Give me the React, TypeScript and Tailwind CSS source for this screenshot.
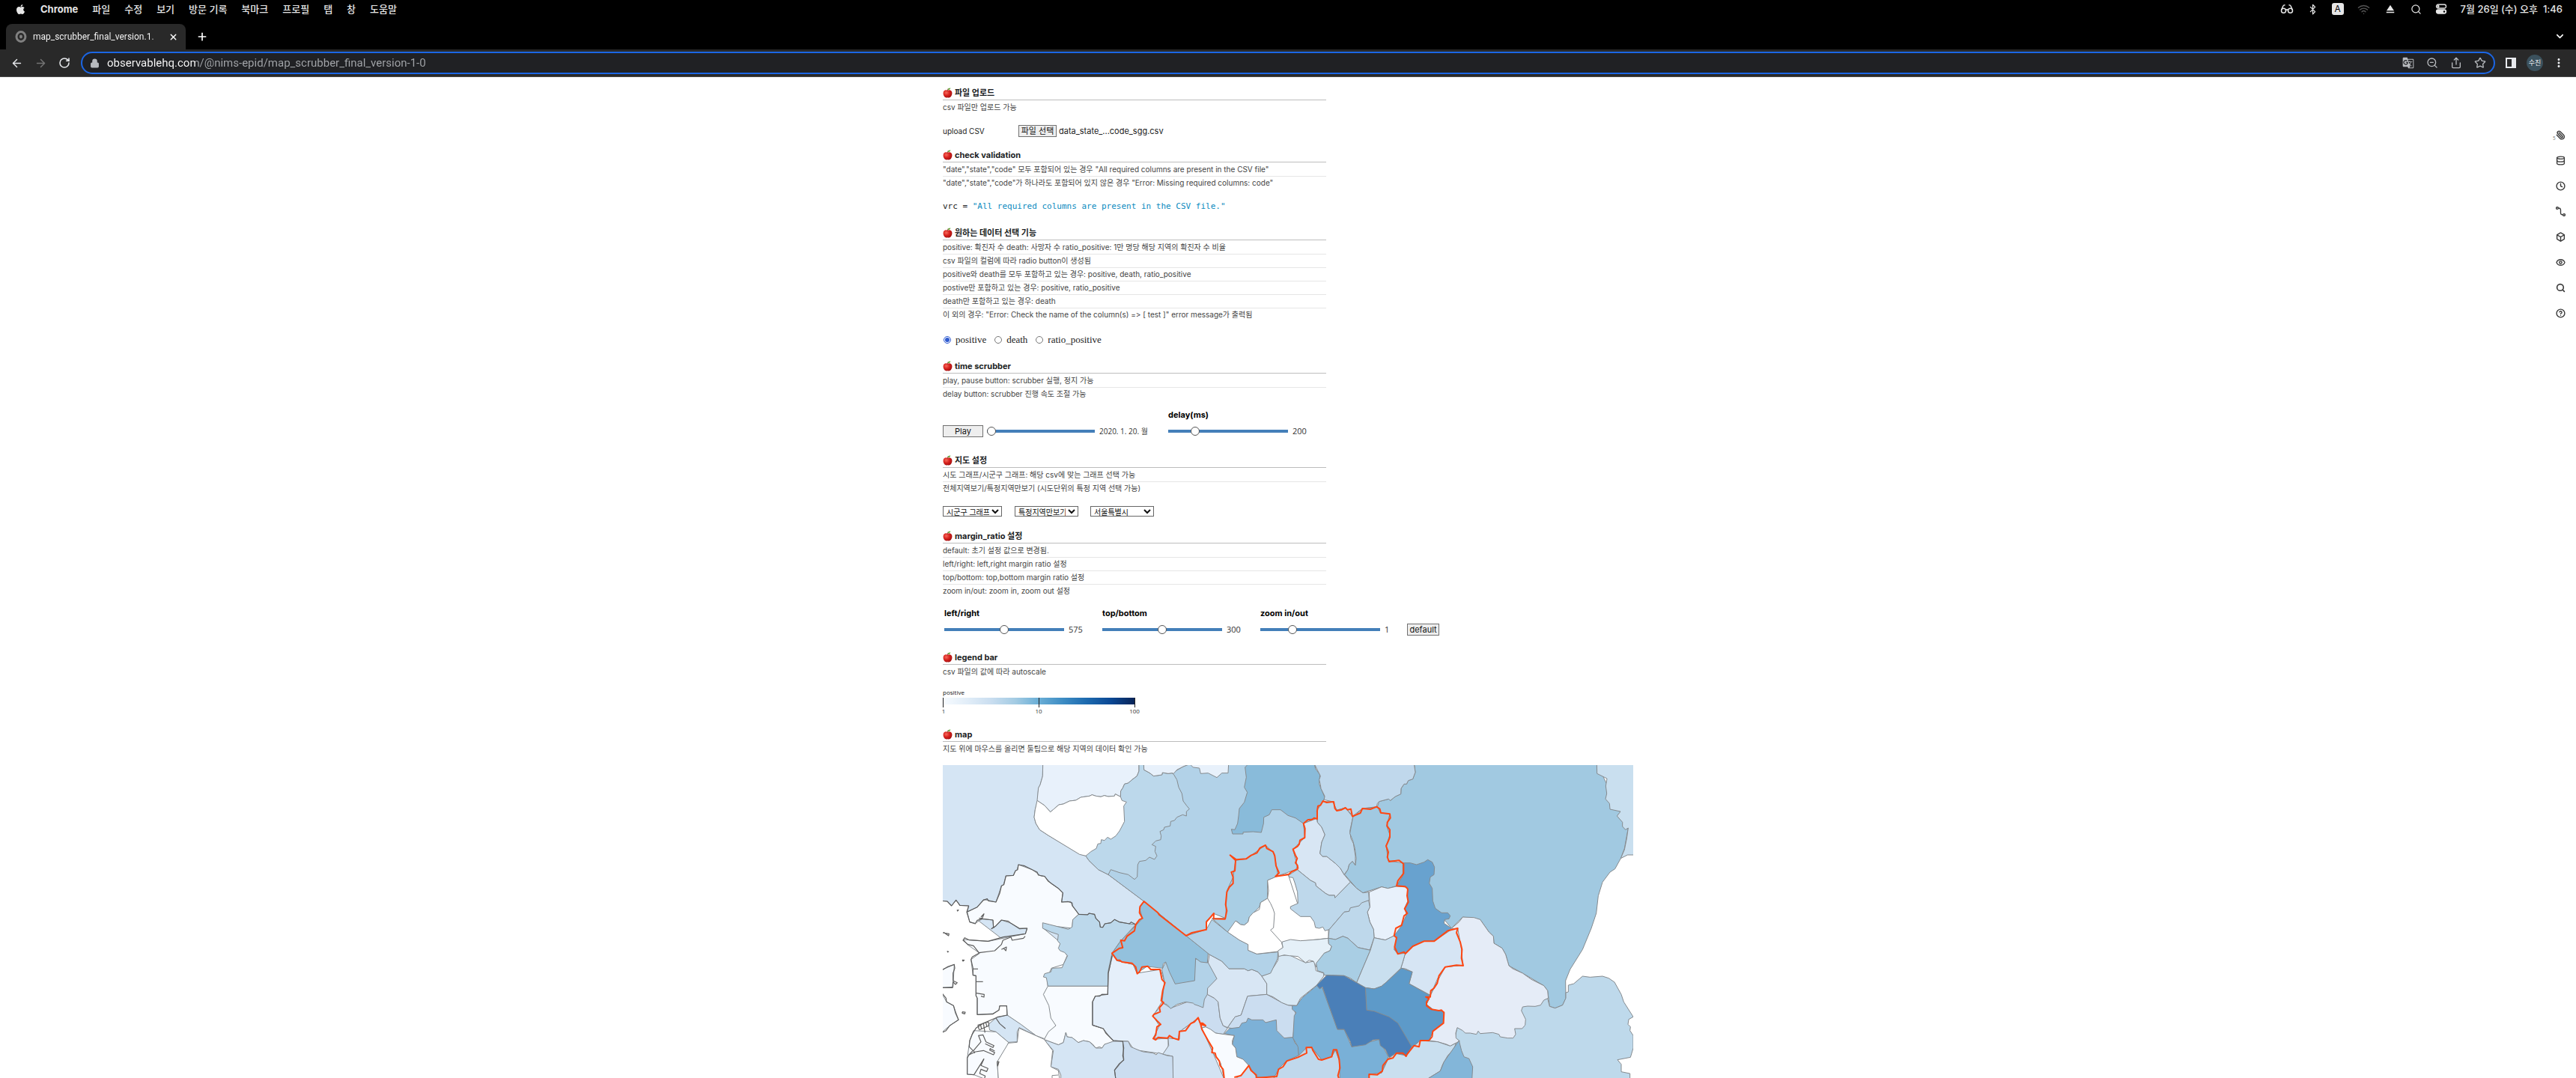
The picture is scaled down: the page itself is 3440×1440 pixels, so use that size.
import React from "react";
import {
  ArrowLeft,
  ArrowRight,
  Bluetooth,
  Box,
  ChevronDown,
  CircleHelp,
  Clock,
  Database,
  Eye,
  Glasses,
  Lock,
  Paperclip,
  Plus,
  RotateCw,
  Search,
  Share,
  Star,
  Wifi,
  X,
  ZoomOut,
} from "lucide-react";
import { FaApple } from "react-icons/fa";
import { MdEject, MdGTranslate, MdMoreVert } from "react-icons/md";

/* ---------- browser chrome ---------- */

const menus = ["파일", "수정", "보기", "방문 기록", "북마크", "프로필", "탭", "창", "도움말"];

function MenuBar() {
  return (
    <div className="flex h-6 items-center justify-between bg-black pl-5 pr-[18px] text-[13px] leading-none text-[#e6e6e6]">
      <nav className="flex items-center gap-[19px]">
        <button aria-label="Apple">
          <FaApple size={15} />
        </button>
        <button className="font-bold">Chrome</button>
        {menus.map((m) => (
          <button key={m} className="font-medium">
            {m}
          </button>
        ))}
      </nav>
      <div className="flex items-center gap-[18px]">
        <Glasses size={18} />
        <Bluetooth size={15} />
        <span className="flex h-4 w-4 items-center justify-center rounded-[3px] bg-[#e6e6e6] text-xs text-black">A</span>
        <Wifi size={17} className="text-[#555]" />
        <MdEject size={18} />
        <Search size={15} />
        <svg width="16" height="14" viewBox="0 0 16 14" fill="none" stroke="#e6e6e6" strokeWidth="1.3">
          <rect x="1.5" y="1" width="13" height="5" rx="2.5" />
          <circle cx="4" cy="3.5" r="1" />
          <rect x="1.5" y="8" width="13" height="5" rx="2.5" fill="#e6e6e6" />
          <circle cx="12" cy="10.5" r="1.2" fill="#000" stroke="none" />
        </svg>
        <span className="font-medium">7월 26일 (수) 오후&nbsp; 1:46</span>
      </div>
    </div>
  );
}

function TabStrip() {
  return (
    <div className="flex h-[42px] items-end justify-between bg-black pl-2 pr-3.5 text-white">
      <div className="flex h-[34px] items-center">
        <div className="flex h-full w-[240px] items-center rounded-t-lg bg-[#292929] pl-3 pr-2.5">
          <svg width="16" height="16" viewBox="0 0 16 16" fill="none" stroke="#808080" strokeWidth="3">
            <ellipse cx="8" cy="8" rx="6" ry="6.5" />
            <ellipse cx="8" cy="8" rx="2" ry="2.4" fill="#808080" stroke="none" />
          </svg>
          <span className="ml-2 w-[174px] whitespace-nowrap bg-[linear-gradient(to_right,#fff_155px,#444_174px)] bg-clip-text font-['Roboto',sans-serif] text-xs text-transparent">
            map_scrubber_final_version.1.
          </span>
          <button aria-label="Close tab" className="ml-2">
            <X size={13} strokeWidth={2.5} />
          </button>
        </div>
        <button aria-label="New tab" className="ml-3.5">
          <Plus size={16} strokeWidth={2.5} />
        </button>
      </div>
      <button aria-label="Search tabs" className="mb-2.5">
        <ChevronDown size={15} strokeWidth={2.5} />
      </button>
    </div>
  );
}

function AddressBar() {
  return (
    <div className="flex h-[37px] items-center border-b border-[#4a4a4a] bg-[#292929] pl-3.5 pr-3.5 text-[#e8eaed]">
      <button aria-label="Back" className="mr-[15px]">
        <ArrowLeft size={17} />
      </button>
      <button aria-label="Forward" className="mr-[15px] text-[#757575]">
        <ArrowRight size={17} />
      </button>
      <button aria-label="Reload" className="mr-3.5">
        <RotateCw size={16} strokeWidth={2.3} />
      </button>
      <div className="flex h-[30px] flex-1 items-center rounded-full border-2 border-[#1b66e5] bg-[#202124] pl-2.5 pr-2.5 text-[#b8bbbf]">
        <Lock size={13} fill="currentColor" />
        <input
          aria-label="Address"
          defaultValue="observablehq.com/@nims-epid/map_scrubber_final_version-1-0"
          className="ml-2.5 flex-1 bg-[linear-gradient(to_right,#fff_118px,#a3a6aa_118px)] bg-clip-text font-['Roboto','Inter',sans-serif] text-[15px] text-transparent outline-none"
        />
        <div className="flex items-center gap-4">
          <button aria-label="Translate">
            <MdGTranslate size={16} />
          </button>
          <button aria-label="Zoom">
            <ZoomOut size={16} />
          </button>
          <button aria-label="Share">
            <Share size={16} />
          </button>
          <button aria-label="Bookmark">
            <Star size={16} />
          </button>
        </div>
      </div>
      <button aria-label="Side panel" className="ml-3.5 flex h-3.5 w-3.5 justify-end border-2 border-[#e8eaed]">
        <span className="h-full w-1 bg-[#e8eaed]" />
      </button>
      <button className="ml-3.5 flex h-[22px] w-[22px] items-center justify-center rounded-full bg-[#3b515d] text-[9px]">수진</button>
      <button aria-label="More" className="ml-3">
        <MdMoreVert size={18} />
      </button>
    </div>
  );
}

/* ---------- notebook ---------- */

function AppleMark() {
  return (
    <svg width="13" height="14" viewBox="0 0 24 26" className="shrink-0">
      <defs>
        <radialGradient id="apple-skin" cx="0.35" cy="0.35" r="0.7">
          <stop offset="0" stopColor="#f56a5c" />
          <stop offset="0.5" stopColor="#d9241f" />
          <stop offset="1" stopColor="#a30f10" />
        </radialGradient>
      </defs>
      <path d="M12 7c-4-2-11-1-11 7 0 6 4 11 8 11 1.500 0 2-.5 3-.5s1.500.5 3 .5c4 0 8-5 8-11 0-8-7-9-11-7z" fill="url(#apple-skin)" />
      <path d="M12 8c0-3 .5-4 2-6" stroke="#6b3e1c" strokeWidth="1.800" fill="none" />
      <path d="M13 5.500c0-3 3-5 6-4.500 0 3-3 5-6 4.500z" fill="#58a92f" />
    </svg>
  );
}

function Notes({ title, rows, children, className }: { title: string; rows: string[]; children?: React.ReactNode; className: string }) {
  return (
    <section className={className}>
      <div className="max-w-[512px]">
        <h3 className="flex h-[19px] items-center gap-[3px] border-b border-[#bdbdbd] text-[11px] font-bold text-[#1b1e23]">
          <AppleMark />
          {title}
        </h3>
        <ul className="text-[10px] leading-[17px] text-[#444]">
          {rows.map((r) => (
            <li key={r} className="border-b border-[#e6e6e6] pt-px last:border-transparent [&+li]:pt-0">
              {r}
            </li>
          ))}
        </ul>
      </div>
      {children}
    </section>
  );
}

function Slider({ id, value, max, className }: { id: string; value: number; max: number; className: string }) {
  return (
    <input
      id={id}
      type="range"
      aria-label={id}
      min={0}
      max={max}
      step="any"
      defaultValue={value}
      className={
        "h-3 appearance-none bg-[linear-gradient(#447fb9,#447fb9)] bg-[length:100%_4px] bg-center bg-no-repeat [&::-webkit-slider-thumb]:h-3 [&::-webkit-slider-thumb]:w-3 [&::-webkit-slider-thumb]:appearance-none [&::-webkit-slider-thumb]:rounded-full [&::-webkit-slider-thumb]:border [&::-webkit-slider-thumb]:border-[#555] [&::-webkit-slider-thumb]:bg-white " +
        className
      }
    />
  );
}

function LabelledSlider({ id, label, value, max, shown }: { id: string; label: string; value: number; max: number; shown: string }) {
  return (
    <div className="w-[211px]">
      <label htmlFor={id} className="block text-[11px] font-bold leading-4 text-black">
        {label}
      </label>
      <div className="mt-2 flex h-3 items-center gap-1.5">
        <Slider id={id} value={value} max={max} className="w-40" />
        <output htmlFor={id} className="font-['Open_Sans',sans-serif] text-[11px] leading-3 text-[#333]">
          {shown}
        </output>
      </div>
    </div>
  );
}

function Radios() {
  return (
    <div className="mt-3.5 flex h-5 items-center font-['Liberation_Serif',serif] text-[13px] text-[#222]">
      {[
        ["positive", "mr-2.5"],
        ["death", "mr-2.5"],
        ["ratio_positive", ""],
      ].map(([name, gap], i) => (
        <label key={name} className={"flex items-center gap-1.5 " + gap}>
          <input type="radio" name="measure" defaultChecked={i === 0} className="ml-px h-2.5 w-2.5 accent-[#2f5bd0]" />
          {name}
        </label>
      ))}
    </div>
  );
}

function Legend() {
  return (
    <svg width="264" height="38" viewBox="0 0 264 38" className="mt-3 overflow-visible font-['Open_Sans',sans-serif]" fontSize="8">
      <defs>
        <linearGradient id="blues">
          <stop offset="0" stopColor="#f7fbff" />
          <stop offset="0.13" stopColor="#e1edf8" />
          <stop offset="0.25" stopColor="#cadef0" />
          <stop offset="0.38" stopColor="#a3cbe3" />
          <stop offset="0.5" stopColor="#6aaed6" />
          <stop offset="0.63" stopColor="#3c8bc3" />
          <stop offset="0.75" stopColor="#1d6aaf" />
          <stop offset="0.88" stopColor="#0b4793" />
          <stop offset="1" stopColor="#082458" />
        </linearGradient>
      </defs>
      <text x="0" y="9" fill="#111">
        positive
      </text>
      <rect x="0" y="13" width="256" height="9" fill="url(#blues)" />
      <path d="M.5 13V26M128.500 13V26M256.500 13V26" stroke="#222" />
      <g fill="#333" textAnchor="middle">
        <text x="1" y="34">1</text>
        <text x="128" y="34">10</text>
        <text x="256" y="34">100</text>
      </g>
    </svg>
  );
}

/* ---------- choropleth ---------- */

type Region = [fill: string, points: string];

const west: Region[] = [
  ["#d5e5f4", "20,30 428,30 427,80 417,115 410,128 407,178 397,215 393,245 400,270 415,295 450,318 575,392 600,400 612,418 650,455 690,475 833,582 815,610 827,650 800,680 700,760 300,760 125,625 131,600 95,598 80,577 62,600 45,582 20,580"],
  ["#b2d2e8", "945,68 990,42 1020,30 1250,30 1520,30 1525,250 1472,270 1478,325 1430,375 1450,440 1440,455 1370,480 1200,560 1160,650 1115,632 1083,660 1083,695 1002,720 833,582 690,475 700,300"],
  ["#e8f1fb", "428,30 813,30 813,60 805,80 785,95 770,108 755,112 748,128 740,140 739,163 718,152 715,160 690,162 674,158 660,163 640,160 625,155 615,160 580,165 560,177 535,180 510,192 492,195 470,214 458,224 435,198 405,178 410,128 417,115 427,80"],
  ["#bcd8eb", "813,30 832,30 833,55 855,67 872,80 905,75 907,66 930,70 945,68 952,73 965,95 972,125 985,150 990,180 1005,200 1015,212 1003,222 1003,240 988,235 965,245 955,258 940,262 938,280 915,285 912,295 897,302 902,320 900,335 880,340 865,355 880,362 877,382 885,400 875,414 855,405 840,418 815,422 808,435 806,484 795,494 770,475 735,467 700,455 690,475 650,455 612,418 600,400 739,163 740,140 748,128 755,112 770,108 785,95 805,80 813,60"],
  ["#ffffff", "405,178 435,198 458,224 470,214 492,195 510,192 535,180 560,177 580,165 615,160 625,155 640,160 660,163 674,158 690,162 715,160 718,152 739,163 745,178 763,184 752,200 755,262 735,300 720,320 700,333 687,325 675,338 662,335 660,350 648,352 642,370 620,383 600,400 575,394 450,318 415,295 400,270 393,245 397,215"],
  ["#e8f1fb", "832,30 833,55 855,67 872,80 905,75 907,66 930,70 945,68 952,70 965,55 990,42 1020,30"],
  ["#e8f1fb", "1015,30 1030,45 1055,48 1060,70 1090,68 1125,86 1145,68 1170,68 1172,30"],
  ["#89bbda", "1252,30 1238,45 1243,85 1235,125 1247,145 1235,185 1215,210 1212,240 1208,270 1197,295 1183,293 1188,312 1230,312 1230,305 1270,303 1303,306 1312,270 1313,245 1335,235 1345,215 1380,215 1410,238 1440,248 1472,270 1495,253 1525,250 1528,210 1550,182 1557,165 1540,125 1535,110 1538,75 1520,50 1515,30"],
  ["#f8fbff", "125,625 165,605 190,575 210,578 240,585 262,520 270,515 280,480 310,478 318,460 325,455 330,435 385,455 420,480 435,482 460,510 490,530 508,548 503,585 540,583 545,600 572,634 548,655 545,690 460,680 430,690 490,740 525,800 510,835 462,850 445,890 448,922 480,1080 435,1133 400,1120 285,1038 283,1001 255,1001 252,1018 227,1032 165,1036 165,970 160,960 160,880 148,878 140,815 175,790 125,755 110,735 210,742 358,712 365,690 335,690 300,670 262,657 230,690 228,657 185,652 157,670 135,665"],
  ["#bcd8eb", "427,668 455,675 530,694 545,685 548,655 572,634 607,635 613,630 635,634 640,650 655,665 658,685 668,686 676,672 700,668 715,655 735,665 775,672 800,675 740,740 705,790 690,860 688,922 448,922 442,888 430,885 435,872 460,865 465,850 505,848 510,835 527,800 515,787 497,780 490,770 497,752 487,740 490,715 460,705 427,690"],
  ["#f8fbff", "448,922 688,922 688,955 665,955 655,962 638,962 627,985 627,1078 670,1092 690,1118 710,1140 707,1150 675,1155 665,1170 655,1165 640,1170 628,1155 615,1145 590,1140 570,1148 545,1128 525,1125 520,1108 510,1148 490,1157 433,1136 450,1105 480,1080 460,1050 452,1000 430,955"],
  ["#e5effa", "708,795 725,820 790,835 805,870 900,855 915,905 905,985 870,1040 895,1080 875,1135 930,1130 930,1165 910,1195 870,1188 815,1180 790,1172 770,1143 710,1140 690,1118 670,1092 627,1078 627,985 638,962 688,955 690,870"],
  ["#cbddf0", "910,990 940,1010 1087,955 1115,970 1130,985 1138,1050 1150,1080 1168,1090 1150,1115 1120,1110 1080,1085 1065,1090 1050,1050 975,1105 970,1135 870,1130 895,1080 868,1040"],
  ["#b2d2e8", "905,855 920,825 1038,812 1090,828 1110,850 1125,892 1088,935 1087,955 1075,975 1070,1008 1050,1000 1035,995 1030,990 1000,985 965,995 940,1012 925,995 905,990 915,905"],
  ["#93c1dd", "833,582 888,627 1002,720 1090,790 1087,828 1060,825 1040,810 1036,900 958,913 935,865 920,825 910,832 908,850 845,843 805,870 790,835 725,820 705,790 740,740 800,680 827,650 815,610"],
  ["#d8e6f4", "1095,795 1145,822 1173,852 1235,852 1250,860 1265,855 1290,865 1305,882 1325,912 1325,955 1248,962 1222,1038 1198,1045 1168,1088 1150,1080 1138,1050 1130,985 1115,970 1087,955 1088,930 1125,892 1090,828"],
  ["#b2d2e8", "1002,720 1083,695 1105,655 1168,705 1215,737 1250,755 1250,778 1285,793 1370,785 1368,812 1350,850 1345,870 1305,882 1290,865 1265,855 1250,860 1235,852 1173,852 1145,822 1095,795"],
  ["#a9cee4", "1105,650 1160,650 1165,540 1190,485 1200,418 1242,412 1320,357 1355,390 1370,480 1328,498 1328,570 1300,587 1295,605 1255,645 1250,665 1235,677 1220,675 1205,662 1168,705"],
  ["#ffffff", "1168,705 1200,660 1220,675 1235,677 1250,665 1255,645 1270,628 1295,615 1300,587 1328,570 1332,540 1328,498 1370,480 1410,472 1448,590 1500,643 1572,695 1572,730 1385,750 1390,767 1370,783 1285,793 1250,778 1250,755 1215,737"],
  ["#cbddf0", "1248,962 1325,955 1380,985 1410,998 1427,1000 1440,1030 1430,1128 1395,1130 1168,1088 1198,1045 1222,1038"],
  ["#cbddf0", "1195,1296 1253,1240 1440,1180 1620,1180 1620,1296"],
  ["#7db1d7", "1155,1112 1175,1092 1215,1087 1225,1070 1243,1066 1250,1050 1265,1057 1310,1057 1320,1068 1363,1057 1365,1100 1395,1130 1430,1127 1438,1150 1453,1165 1453,1200 1405,1222 1385,1245 1370,1280 1310,1288 1283,1285 1253,1240 1230,1215 1205,1205 1200,1170 1187,1155 1195,1120"],
  ["#d3e3f3", "930,1130 975,1135 975,1105 1050,1050 1065,1090 1110,1190 1155,1296 948,1296 948,1203 908,1195 932,1160"],
  ["#f8fbff", "1080,1085 1100,1095 1120,1110 1155,1115 1195,1120 1187,1140 1187,1155 1200,1170 1205,1205 1230,1215 1253,1240 1225,1275 1195,1296 1155,1296 1140,1230 1110,1190 1065,1090"],
  ["#cbddf0", "748,1143 770,1143 780,1165 815,1180 830,1185 870,1190 882,1197 890,1188 925,1200 948,1203 950,1296 720,1296 715,1260 752,1215"],
  ["#d5e5f4", "433,1136 490,1157 510,1148 520,1108 525,1125 545,1128 570,1148 590,1140 615,1145 640,1170 665,1170 675,1155 710,1143 748,1143 752,1215 715,1260 720,1296 500,1296 500,1278 490,1255 460,1245 470,1180"],
  ["#d5e5f4", "210,1075 245,1045 285,1038 340,1075 400,1120 333,1088 325,1105 325,1145 290,1147 240,1105 215,1098"],
  ["#f8fbff", "150,1100 240,1105 290,1147 285,1165 245,1225 250,1296 200,1296 152,1277 125,1275 125,1210 135,1140"],
  ["#ffffff", "290,1150 325,1147 332,1090 433,1135 467,1180 460,1245 490,1260 495,1296 250,1296 245,1225"],
  ["#f8fbff", "20,858 73,835 68,925 20,928"],
  ["#f8fbff", "20,945 42,985 70,1000 90,1057 55,1080 20,1110"],
];

const east: Region[] = [
  ["#a1c9e1", "565,30 570,65 560,92 542,98 535,112 525,112 513,130 512,152 490,162 470,178 463,172 425,182 418,203 430,228 468,232 455,280 468,315 453,360 462,420 500,418 520,428 620,500 640,600 715,690 760,645 830,655 865,705 883,722 885,750 918,770 932,795 945,840 1000,870 1085,920 1100,940 1108,1003 1130,1010 1160,998 1173,970 1172,900 1190,855 1240,775 1275,690 1295,630 1303,560 1320,505 1350,465 1370,452 1393,410 1408,370 1423,288 1297,30"],
  ["#c0d8ec", "165,30 180,60 190,80 185,95 190,115 192,130 207,160 205,175 240,183 255,217 290,207 320,240 358,210 415,203 418,190 425,182 463,172 470,178 490,162 512,152 513,130 525,112 535,112 542,98 560,92 570,65 565,30"],
  ["#c9dfef", "1297,30 1298,70 1338,90 1333,120 1337,150 1332,172 1348,190 1350,213 1392,222 1378,240 1400,265 1400,282 1412,295 1423,288 1417,330 1408,375 1393,410 1420,396 1450,396 1450,30"],
  ["#bed9eb", "1183,918 1205,912 1240,882 1270,886 1320,882 1345,890 1368,906 1395,955 1405,985 1443,1045 1425,1055 1422,1075 1432,1085 1430,1100 1443,1120 1443,1170 1432,1207 1380,1217 1395,1235 1395,1265 1430,1272 1430,1296 700,1296 730,1125 738,1085 1100,970 1108,1003 1130,1010 1160,998 1173,970 1173,948 1183,945"],
  ["#e5ecf7", "715,690 745,665 760,645 805,647 830,655 865,705 883,722 885,750 918,770 932,795 945,840 960,852 1000,870 1035,895 1085,920 1100,940 1103,970 1085,978 1072,998 1050,1003 1020,1002 1000,1005 995,1020 1012,1055 1010,1078 998,1092 968,1092 972,1115 962,1130 940,1130 910,1125 905,1115 880,1108 830,1112 822,1102 815,1115 790,1110 770,1110 760,1100 738,1088 732,1110 733,1130 748,1142 710,1162 695,1155 660,1145 625,1140 640,1100 675,1070 685,1025 640,1015 615,995 630,960 660,900 690,845 760,838 755,775 735,695"],
  ["#68a2cf", "520,428 550,428 575,435 605,425 620,415 638,425 647,445 645,475 630,485 626,510 638,530 640,580 650,610 675,628 700,628 710,640 705,652 688,655 685,670 715,690 645,742 600,742 555,765 530,790 500,793 485,775 495,730 485,715 515,680 535,635 527,610 540,580 535,525 495,520 520,480"],
  ["#d6e5f4", "530,790 555,765 600,742 645,742 715,695 740,690 755,775 760,838 690,845 660,890 630,958 545,912 558,865 530,852 512,850 520,825"],
  ["#d8e6f4", "122,270 175,250 178,265 195,285 208,315 195,345 188,390 198,402 215,402 250,430 270,450 285,475 310,505 248,568 247,558 225,558 210,550 172,520 170,508 150,498 97,455 95,430 80,375 128,325"],
  ["#bed8eb", "178,250 175,220 200,182 240,183 255,217 290,207 320,245 308,300 312,330 322,350 330,400 330,438 318,422 305,435 300,455 285,475 270,450 250,430 215,402 198,402 188,390 195,345 208,315 195,285 178,265"],
  ["#a1c9e1", "320,245 358,210 420,205 430,228 468,232 455,280 468,315 453,360 462,420 520,428 520,480 495,520 460,530 435,524 360,548 335,530 287,475 300,455 305,435 318,422 330,438 333,410 328,370 320,340 308,310"],
  ["#bed8eb", "62,478 97,455 150,498 170,508 172,520 210,550 225,558 247,558 248,568 300,515 310,505 335,530 360,548 383,545 385,578 350,600 310,610 305,622 285,625 225,695 208,700 200,685 185,690 170,687 165,665 150,643 110,643 70,612 70,603 100,590 98,545 88,510 80,487 65,485"],
  ["#e8f1fb", "385,545 435,524 460,530 495,522 538,525 540,580 527,610 535,635 515,680 485,720 450,737 405,728 403,695 388,665 378,625 388,605"],
  ["#bed8eb", "225,695 285,625 305,622 310,608 345,600 355,588 383,578 388,605 378,625 388,665 403,695 405,728 388,777 340,767 300,730 280,722 250,735 222,730"],
  ["#d8e8f4", "22,800 65,797 130,828 165,822 172,860 203,870 203,882 175,918 110,970 95,1000 60,998 35,988 0,965 -25,955 -25,912 -45,882 -10,870 0,850 20,818"],
  ["#e5f0f8", "35,745 70,735 110,740 180,735 222,730 223,752 235,762 228,780 205,790 175,835 173,845 162,822 145,818 130,828 100,803 65,800 45,797 22,803 20,780 40,767"],
  ["#a9cee4", "222,730 250,735 280,722 300,730 340,767 390,778 335,908 310,890 285,880 205,878 203,868 178,860 173,830 205,790 228,780 235,762 223,752"],
  ["#c9dfef", "335,908 390,778 405,728 450,737 485,720 495,730 485,775 500,793 530,790 520,825 512,850 455,905 435,922 405,933 370,928"],
  ["#79b0d7", "77,1000 95,1000 115,970 175,920 198,930 258,1095 285,1095 315,1165 425,1135 462,1205 435,1270 385,1275 385,1296 265,1296 265,1220 250,1178 235,1205 195,1217 155,1168 135,1170 103,1200 100,1165 80,1130 85,1040 93,1028 77,1015"],
  ["#5d9ac9", "370,928 405,933 435,922 455,905 515,850 558,865 545,912 630,960 615,995 640,1015 685,1025 680,1070 640,1105 625,1140 590,1140 585,1165 560,1168 500,1090 410,1025 375,1018"],
  ["#4a7fb8", "175,918 215,878 285,880 335,908 370,928 375,1018 405,1022 465,1045 500,1070 556,1165 535,1200 490,1195 465,1208 450,1175 430,1160 425,1135 400,1138 370,1157 315,1165 310,1145 285,1095 258,1095 215,975 198,925 187,933"],
  ["#c9dfef", "385,1296 385,1275 435,1270 462,1212 490,1192 535,1200 560,1165 590,1140 660,1145 710,1162 733,1150 725,1175 700,1200 680,1235 670,1262 615,1296"],
  ["#83b6d9", "615,1296 670,1262 685,1225 745,1140 755,1180 765,1205 785,1212 800,1245 797,1296"],
  ["#c0d8ec", "0,1296 25,1250 55,1220 103,1200 135,1168 155,1168 195,1217 235,1205 250,1178 265,1220 268,1296"],
];

const coast = [
  "20,580 45,582 62,600 80,577 90,590 95,598 131,600 123,625 135,665 157,672 165,658 185,652 228,657 230,685 222,692 240,680 262,657 290,662 300,670 335,692 365,690 358,712 270,725 208,742 133,737 115,728 108,738 128,755 150,760 172,788 235,780 262,755 268,738 300,725 305,738 350,730 357,722",
  "123,625 165,605 190,577 205,572 210,580 240,585 255,550 262,520 272,515 280,480 310,478 318,460 327,455 330,435 355,440 385,455 405,465 410,477 435,482 450,502 490,530 508,548 503,585 528,583 545,588 547,600 572,634 607,636 613,630 635,634 640,650 655,665 658,685 668,686 676,672 700,668 715,655 735,665 775,672 782,665 800,675",
  "172,790 145,805 140,815 148,850 148,878 160,880 160,960 165,970 165,1036 227,1034 252,1018 255,1001 283,1001 285,1038 245,1047 190,1070 160,1090 145,1115 135,1140 133,1165 148,1180 132,1197 125,1210 125,1275 152,1277 192,1213",
  "148,853 168,853",
  "160,904 188,904",
  "162,950 193,955 192,966 180,962",
  "172,1095 168,1078 210,1065 212,1080 172,1098",
  "190,1072 196,1108",
  "178,1075 182,1092",
  "200,1070 204,1084",
  "240,1050 255,1072 278,1092",
  "132,1197 158,1185 190,1180 230,1197 235,1188 215,1178 217,1172 235,1182",
  "155,1190 150,1180 180,1145 170,1120 188,1117 200,1145 232,1160 228,1168 197,1153",
  "192,1213 180,1240 208,1252 203,1264 180,1255 175,1272 197,1282 193,1296",
  "20,860 45,845 73,835 75,850 68,870 68,900 85,908 78,915 68,905 66,928 20,928",
  "20,945 40,970 42,985 70,1000 78,1030 90,1057 55,1080 40,1100 20,1110",
  "180,645 192,632 185,650 172,650",
  "27,708 52,712 50,720 30,706",
  "262,775 282,765 280,780 270,770",
  "105,1025 117,1026 115,1033 105,1030 105,1025",
  "105,817 113,818 108,822 105,817",
  "83,618 90,617 85,622",
  "44,782 50,784 45,786",
  "245,1225 252,1225 247,1242 245,1225",
  "705,800 697,840 690,870 688,955 665,955 655,962 638,962 627,985 627,1078 670,1092 680,1110 710,1140 748,1143 752,1170 748,1200 752,1218 735,1232 715,1258 720,1296",
];

const inner = ["1328,570 1340,590 1350,612 1356,630 1352,688 1340,697 1388,750", "465,1296 465,1280 490,1278"];

const seoulWest =
  "1155,1296 1150,1255 1138,1240 1135,1222 1122,1205 1118,1190 1105,1188 1108,1170 1090,1140 1065,1095 1060,1075 1080,1080 1068,1070 1058,1070 1050,1048 1035,1065 1020,1072 1000,1100 975,1103 972,1137 950,1130 935,1120 928,1130 890,1127 880,1137 870,1132 880,1118 885,1085 900,1075 885,1060 868,1042 873,1035 898,1025 895,1008 912,988 902,980 908,940 917,908 905,895 897,855 860,855 848,842 825,845 815,865 806,872 800,845 785,830 745,825 735,818 725,818 705,790 735,770 748,768 740,738 755,740 765,722 795,700 800,675 815,655 827,650 815,628 817,603 833,582 888,627 895,637 1002,720 1025,708 1083,695 1083,665 1113,630 1112,652 1158,653 1165,620 1160,595 1165,545 1175,525 1190,510 1190,485 1183,465 1197,460 1200,418 1178,397 1203,415 1242,412 1262,398 1285,388 1298,368 1320,357 1325,370 1350,383 1357,400 1362,440 1374,468 1360,482 1412,475 1425,463 1450,452";
const seoulEast =
  "100,452 98,438 90,428 97,410 90,398 80,373 98,362 105,353 108,337 127,327 128,290 122,270 140,255 155,255 165,248 177,252 177,220 180,200 190,197 200,180 215,186 243,183 248,210 255,219 275,215 290,207 298,215 312,212 318,242 350,228 358,210 390,213 415,203 428,212 432,227 468,232 470,248 458,265 457,280 468,295 468,325 462,340 453,360 462,385 458,405 465,423 505,418 523,432 523,470 500,500 495,520 530,523 540,533 537,560 542,585 527,612 538,630 525,640 515,678 492,690 485,720 495,727 487,765 500,793 525,785 530,792 560,762 605,742 645,742 700,700 740,690 735,708 750,745 757,775 755,810 762,840 735,838 690,845 665,880 658,910 645,930 632,940 630,965 612,965 625,972 615,985 615,1000 635,1015 665,1020 675,1018 685,1028 683,1070 640,1103 637,1125 625,1140 590,1140 585,1165 565,1160 537,1195 533,1203 520,1190 495,1190 480,1210 460,1215 440,1240 438,1262 418,1277 385,1275 385,1296";
const seoulSouth =
  "1195,1287 1222,1280 1253,1240 1262,1260 1283,1278 1283,1290 1310,1288 1365,1284 1372,1255 1390,1245 1405,1222 1450,1207 1485,1190 1483,1168 1505,1167 1510,1180 1532,1215 1545,1218 1585,1205 1592,1177 1605,1177 1615,1215 1618,1250 1610,1280 1615,1296";

function Choropleth() {
  return (
    <svg viewBox="27 36 2766 1254" className="mt-3 block w-[922px]" role="img" aria-label="map" strokeLinejoin="round">
      <g stroke="#858a8e" strokeWidth="3">
        {west.map(([fill, points], i) => (
          <polygon key={i} points={points} fill={fill} />
        ))}
        <g transform="translate(1350 0)">
          {east.map(([fill, points], i) => (
            <polygon key={i} points={points} fill={fill} />
          ))}
        </g>
        {inner.map((p) => (
          <polyline key={p} points={p} fill="none" />
        ))}
      </g>
      <g stroke="#5c5c5c" strokeWidth="3.5" fill="none">
        {coast.map((p) => (
          <polyline key={p} points={p} />
        ))}
      </g>
      <g stroke="#ff4713" strokeWidth="6" fill="none">
        <polyline points={seoulWest} />
        <polyline points={seoulSouth} />
        <polyline points={seoulEast} transform="translate(1350 0)" />
      </g>
    </svg>
  );
}

function Toolbox() {
  const icon = "text-[#3a3a3a]";
  return (
    <aside className="flex flex-col gap-[21px] pr-3.5 pt-[71px]">
      <button aria-label="Files" className="relative">
        <Paperclip size={13} strokeWidth={2.6} className={icon + " -scale-x-100"} />
        <span className="absolute -left-1 top-2 text-[6px] leading-none text-[#777]">5</span>
      </button>
      <button aria-label="Databases"><Database size={13} strokeWidth={2.6} className={icon} /></button>
      <button aria-label="History"><Clock size={13} strokeWidth={2.6} className={icon} /></button>
      <button aria-label="Minimap">
        <svg width="13" height="13" viewBox="0 0 13 13" fill="none" stroke="#3a3a3a" strokeWidth="1.400">
          <circle cx="2" cy="2" r="1.400" />
          <circle cx="11" cy="11" r="1.400" />
          <path d="M3.500 2C7 2 6.500 4 6.500 6.500S6 11 9.500 11" />
        </svg>
      </button>
      <button aria-label="Imports"><Box size={13} strokeWidth={2.6} className={icon} /></button>
      <button aria-label="Views"><Eye size={13} strokeWidth={2.6} className={icon} /></button>
      <button aria-label="Find"><Search size={13} strokeWidth={3} className={icon} /></button>
      <button aria-label="Help"><CircleHelp size={13} strokeWidth={2.6} className={icon} /></button>
    </aside>
  );
}

const select = "h-3.5 rounded-none border border-[#666] bg-white text-[10px] leading-3 text-[#111]";
const button = "flex h-4 items-center justify-center border border-[#707070] bg-[#eee] text-[11px] leading-none text-[#111]";

export default function App() {
  return (
    <div className="flex h-screen flex-col overflow-hidden bg-white font-['Inter','Noto_Sans_CJK_KR',sans-serif] [font-feature-settings:'calt'_0]">
      <header>
        <MenuBar />
        <TabStrip />
        <AddressBar />
      </header>
      <div className="flex justify-between">
        <div className="w-[27px]" />
        <main className="w-[922px] pt-3">
          <Notes title="파일 업로드" rows={["csv 파일만 업로드 가능"]} className="h-[83px]">
            <div className="mt-3.5 flex h-4 items-center text-[10px] text-[#222]">
              <span className="w-[101px]">upload CSV</span>
              <input id="csv" type="file" accept=".csv" className="sr-only" />
              <label htmlFor="csv" className={button + " w-[51px]"}>
                파일 선택
              </label>
              <span className="ml-[3px] text-[11px]">data_state_...code_sgg.csv</span>
            </div>
          </Notes>
          <Notes
            title="check validation"
            rows={[
              '"date","state","code" 모두 포함되어 있는 경우 "All required columns are present in the CSV file"',
              '"date","state","code"가 하나라도 포함되어 있지 않은 경우 "Error: Missing required columns: code"',
            ]}
            className="h-[104px]"
          >
            <p className="mt-3.5 font-['DejaVu_Sans_Mono',monospace] text-[11px] leading-4 text-[#1b1e23]">
              vrc = <span className="text-[#0b8bc0]">"All required columns are present in the CSV file."</span>
            </p>
          </Notes>
          <Notes
            title="원하는 데이터 선택 기능"
            rows={[
              "positive: 확진자 수 death: 사망자 수 ratio_positive: 1만 명당 해당 지역의 확진자 수 비율",
              "csv 파일의 컬럼에 따라 radio button이 생성됨",
              "positive와 death를 모두 포함하고 있는 경우: positive, death, ratio_positive",
              "postive만 포함하고 있는 경우: positive, ratio_positive",
              "death만 포함하고 있는 경우: death",
              '이 외의 경우: "Error: Check the name of the column(s) => [ test ]" error message가 출력됨',
            ]}
            className="h-[178px]"
          >
            <Radios />
          </Notes>
          <Notes
            title="time scrubber"
            rows={["play, pause button: scrubber 실행, 정지 가능", "delay button: scrubber 진행 속도 조절 가능"]}
            className="h-[126px]"
          >
            <div className="mt-2.5 flex items-end">
              <div className="-mb-0.5 flex h-4 w-[301px] items-center">
                <button className={button + " w-[54px]"}>Play</button>
                <Slider id="time" value={0} max={100} className="ml-[5px] w-36" />
                <output htmlFor="time" className="ml-1.5 font-['Open_Sans','Noto_Sans_CJK_KR',sans-serif] text-[10px] leading-3 text-[#333]">
                  2020. 1. 20. 월
                </output>
              </div>
              <LabelledSlider id="delay" label="delay(ms)" value={200} max={1000} shown="200" />
            </div>
          </Notes>
          <Notes
            title="지도 설정"
            rows={["시도 그래프/시군구 그래프: 해당 csv에 맞는 그래프 선택 가능", "전체지역보기/특정지역만보기 (시도단위의 특정 지역 선택 가능)"]}
            className="h-[101px]"
          >
            <div className="mt-3.5 flex items-center">
              <select aria-label="그래프" className={select + " mr-[17px] w-[79px]"}>
                <option>시군구 그래프</option>
                <option>시도 그래프</option>
              </select>
              <select aria-label="보기" className={select + " mr-4 w-[85px]"}>
                <option>특정지역만보기</option>
                <option>전체지역보기</option>
              </select>
              <select aria-label="지역" className={select + " w-[85px]"}>
                <option>서울특별시</option>
              </select>
            </div>
          </Notes>
          <Notes
            title="margin_ratio 설정"
            rows={[
              "default: 초기 설정 값으로 변경됨.",
              "left/right: left,right margin ratio 설정",
              "top/bottom: top,bottom margin ratio 설정",
              "zoom in/out: zoom in, zoom out 설정",
            ]}
            className="h-[162px]"
          >
            <div className="mt-3 flex items-end pl-0.5">
              <LabelledSlider id="lr" label="left/right" value={575} max={1150} shown="575" />
              <LabelledSlider id="tb" label="top/bottom" value={300} max={600} shown="300" />
              <LabelledSlider id="zoom" label="zoom in/out" value={1} max={4} shown="1" />
              <button className={button + " -mb-0.5 -ml-[15px] w-[43px]"}>default</button>
            </div>
          </Notes>
          <Notes title="legend bar" rows={["csv 파일의 값에 따라 autoscale"]} className="h-[103px]">
            <Legend />
          </Notes>
          <Notes title="map" rows={["지도 위에 마우스를 올리면 툴팁으로 해당 지역의 데이터 확인 가능"]} className="">
            <Choropleth />
          </Notes>
        </main>
        <Toolbox />
      </div>
    </div>
  );
}
